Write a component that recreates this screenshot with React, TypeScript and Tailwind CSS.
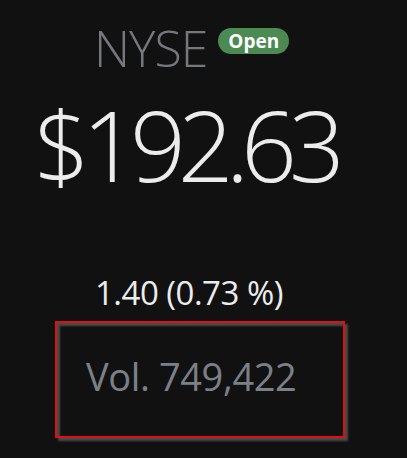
import React from "react";

export default function App() {
  return (
    <div
      className="w-[407px] h-[458px] bg-[#111111] overflow-hidden flex flex-col"
      style={{ fontFamily: '"Open Sans", "Noto Sans", sans-serif' }}
    >
      <div className="flex items-center pl-[94px] pt-[18px] gap-[11px] h-[78px]">
        <span className="text-[50px] leading-[60px] font-light text-[#75787d] tracking-[-1px]">NYSE</span>
        <span className="mt-[-14px] h-[26px] px-[10px] rounded-full bg-[#4b8a52] text-white text-[19px] font-bold leading-[26px] flex items-center">
          Open
        </span>
      </div>
      <div className="pl-[34px] mt-[6px] h-[120px] text-[98px] leading-[120px] font-light text-[#ececec] tracking-[-8px]">
        $192.63
      </div>
      <div className="pl-[95px] mt-[70px] h-[37px] text-[33px] leading-[37px] text-[#ececec] tracking-[-0.5px] font-normal">
        1.40 (0.73 %)
      </div>
      <div className="ml-[55px] mt-[10px] w-[290px] h-[117px] border-2 border-[#e01010] shadow-[inset_3px_3px_2px_#4a4a4a,3px_3px_2px_#4a4a4a] flex items-center pl-[29px]">
        <span className="text-[38px] leading-[44px] text-[#7b8088] tracking-[-0.4px] mb-[7px]">Vol. 749,422</span>
      </div>
    </div>
  );
}
